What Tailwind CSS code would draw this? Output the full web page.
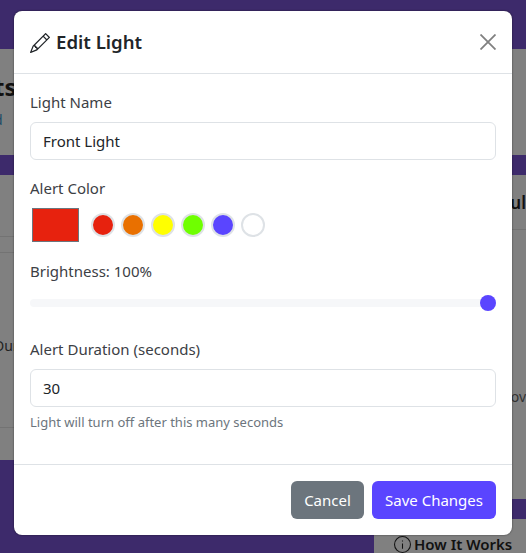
<!DOCTYPE html>
<html>
<head>
<meta charset="utf-8">
<title>Edit Light</title>
<script src="https://cdn.jsdelivr.net/npm/@tailwindcss/browser@4"></script>
</head>
<body class="font-['Noto_Sans','Open_Sans',sans-serif]">
<div class="relative w-[526px] h-[553px] overflow-hidden bg-[#3d2a6b]">

    <!-- dimmed page behind the modal -->
    <div class="pt-[49px] text-[#111]">
        <div class="h-[106px] bg-[#808080] pt-[22px] overflow-hidden">
            <p class="text-[24px] font-bold leading-[32px] ml-[-6px] whitespace-nowrap">ts</p>
            <p class="text-[14px] leading-[20px] ml-[-6px] mt-[7px] text-[#1c4a66]">d</p>
        </div>
        <div class="flex mt-[20px] items-start">
            <div class="w-[263px] h-[285px] bg-[#808080] overflow-hidden">
                <div class="h-[62px] border-b border-[#737373]"></div>
                <div class="h-[16px] border-b border-[#737373]"></div>
                <p class="text-[14px] leading-[20px] mt-[83px] ml-[-6px] text-[#222]">Dur</p>
                <div class="h-[72px] border-b border-[#737373]"></div>
            </div>
            <div class="w-[263px] h-[324px] bg-[#808080] overflow-hidden text-right">
                <div class="h-[55px] border-b border-[#737373] pt-[16px]">
                    <p class="text-[17px] font-semibold leading-[24px]">Resul</p>
                </div>
                <p class="text-[14px] leading-[20px] mt-[157px] text-[#333]">prov</p>
            </div>
        </div>
        <div class="absolute left-[374px] top-[519px] w-[152px] h-[34px] bg-[#808080] pl-[20px] pt-[17px] flex items-center gap-[3px] font-semibold text-[15px]">
            <svg class="w-[17px] h-[17px]" viewBox="0 0 16 16" fill="none" stroke="#111" stroke-width="1">
                <circle cx="8" cy="8" r="7.5"/>
                <path d="M8 7v5M8 4.2v1"/>
            </svg>
            <span>How It Works</span>
        </div>
    </div>

    <!-- modal -->
    <div class="absolute left-[14px] top-[11px] w-[498px] h-[524px] bg-white rounded-lg flex flex-col shadow-[0_0_2px_rgba(0,0,0,0.6)]">
        <div class="h-[63px] border-b border-[#dee2e6] flex items-center justify-between px-[16px]">
            <h2 class="flex items-center gap-[6px] text-[18.6px] font-semibold text-[#212529] leading-none pt-[1px]">
                <svg class="w-[20px] h-[20px]" viewBox="0 0 16 16" fill="#212529">
                    <path d="M12.146.146a.5.5 0 0 1 .708 0l3 3a.5.5 0 0 1 0 .708l-10 10a.5.5 0 0 1-.168.11l-5 2a.5.5 0 0 1-.65-.65l2-5a.5.5 0 0 1 .11-.168l10-10zM11.207 2.5 13.5 4.793 14.793 3.5 12.5 1.207 11.207 2.5zm1.586 3L10.5 3.207 4 9.707V10h.5a.5.5 0 0 1 .5.5v.5h.5a.5.5 0 0 1 .5.5v.5h.293l6.5-6.5zm-9.761 5.175-.106.106-1.528 3.821 3.821-1.528.106-.106A.5.5 0 0 1 5 12.5V12h-.5a.5.5 0 0 1-.5-.5V11h-.5a.5.5 0 0 1-.468-.325z"/>
                </svg>
                Edit Light
            </h2>
            <svg class="w-[16px] h-[16px]" viewBox="0 0 16 16" stroke="#808080" stroke-width="1.8" fill="none">
                <path d="M.5.5l15 15M15.500.5l-15 15"/>
            </svg>
        </div>

        <div class="flex-1 px-[16px] pt-[16px] text-[#212529]">
            <label class="block text-[15px] leading-[24px] text-[#3c4045]">Light Name</label>
            <div class="mt-[8px] h-[38px] border border-[#dee2e6] rounded-md flex items-center px-[12px] text-[15px]">Front Light</div>

            <label class="block text-[15px] leading-[24px] mt-[16px] text-[#3c4045]">Alert Color</label>
            <div class="mt-[8px] flex items-center">
                <div class="w-[47px] h-[34px] ml-[2px] bg-[#e7220e] border border-[#6c757d]"></div>
                <div class="flex gap-[6px] ml-[12px]">
                    <span class="w-[24px] h-[24px] rounded-full border-2 border-[#dee2e6] bg-[#e7220e]"></span>
                    <span class="w-[24px] h-[24px] rounded-full border-2 border-[#dee2e6] bg-[#e97000]"></span>
                    <span class="w-[24px] h-[24px] rounded-full border-2 border-[#dee2e6] bg-[#ffff00]"></span>
                    <span class="w-[24px] h-[24px] rounded-full border-2 border-[#dee2e6] bg-[#6fff00]"></span>
                    <span class="w-[24px] h-[24px] rounded-full border-2 border-[#dee2e6] bg-[#5a45ff]"></span>
                    <span class="w-[24px] h-[24px] rounded-full border-2 border-[#dee2e6] bg-white"></span>
                </div>
            </div>

            <label class="block text-[15px] leading-[24px] mt-[17px] text-[#3c4045]">Brightness: 100%</label>
            <div class="relative mt-[16px] h-[8px] rounded-full bg-[#f6f7f9]">
                <span class="absolute right-0 top-[-4px] w-[16px] h-[16px] rounded-full bg-[#5a45ff]"></span>
            </div>

            <label class="block text-[15px] leading-[24px] mt-[30px] text-[#3c4045]">Alert Duration (seconds)</label>
            <div class="mt-[8px] h-[38px] border border-[#dee2e6] rounded-md flex items-center px-[12px] text-[15px]">30</div>
            <p class="mt-[5px] text-[13px] leading-[20px] text-[#6c757d]">Light will turn off after this many seconds</p>
        </div>

        <div class="h-[71px] border-t border-[#dee2e6] flex items-center justify-end gap-[8px] px-[16px]">
            <button class="h-[38px] w-[73px] rounded-md bg-[#6c757d] text-white text-[15px]">Cancel</button>
            <button class="h-[38px] w-[124px] rounded-md bg-[#5a45ff] text-white text-[15px]">Save Changes</button>
        </div>
    </div>
</div>
</body>
</html>
